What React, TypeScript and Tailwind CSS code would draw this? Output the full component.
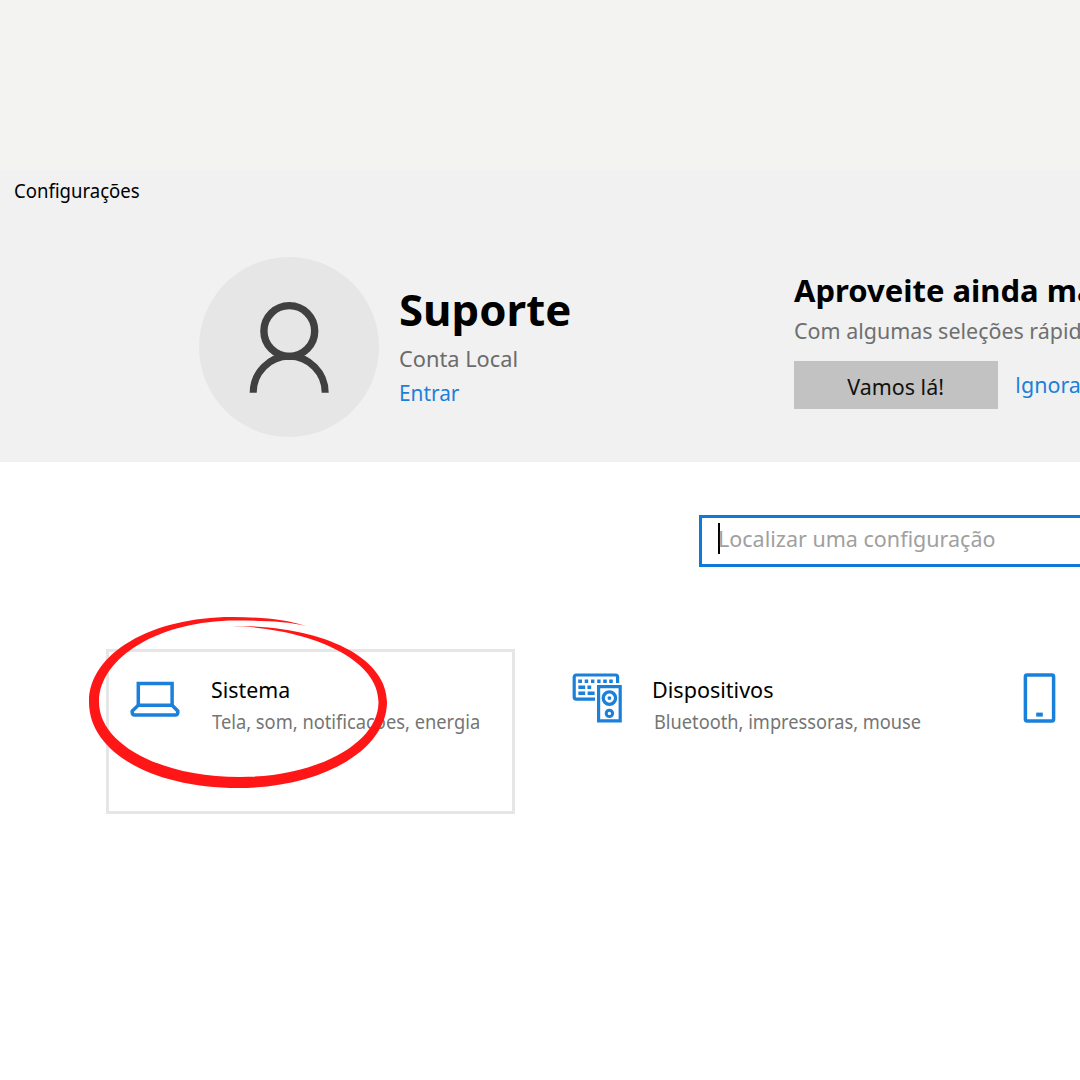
import type { ReactNode } from "react";

function PersonIcon() {
  return (
    <svg viewBox="0 0 180 180" className="size-[180px]" fill="none" stroke="#404040">
      <circle cx="90.3" cy="74" r="25.4" strokeWidth="7.4" />
      <path d="M54.2 135.7a36 36.4 0 0 1 72 0" strokeWidth="7" />
    </svg>
  );
}

function LaptopIcon() {
  return (
    <svg viewBox="0 0 50 38" className="h-[38px] w-[50px]" fill="none" stroke="#1a80da" strokeWidth="3.5" strokeLinejoin="round">
      <path d="M8.3 25.2V3.4h33.8v21.8z" strokeLinejoin="miter" />
      <path d="M8.3 25.2 2.2 31v1.6c0 1.6.8 2.4 2.4 2.4h40.8c1.6 0 2.4-.8 2.4-2.4V31l-5.7-5.8" />
    </svg>
  );
}

function DevicesIcon() {
  return (
    <svg viewBox="0 0 50 50" className="size-[50px]" fill="none" stroke="#1a80da" strokeWidth="3.2">
      <path d="M23 26.1H4.2a2 2 0 0 1-2-2V4a2 2 0 0 1 2-2h39.4a2 2 0 0 1 2 2v6" />
      <path d="M6.2 8.3h3.8M12.7 8.3h3.5M19 8.3h3.4M25.2 8.3h3.4M31.2 8.3h3.6M37.2 8.3h3.6M6.4 14.3h6.8M15.4 14.3h3.8M6.4 20.3h6.8M15.6 20.3h7" strokeWidth="3.4" />
      <path d="M26.6 13.7h21.6v34.2H26.6z" />
      <circle cx="37.4" cy="25.1" r="6.2" strokeWidth="3.3" />
      <circle cx="37.4" cy="25.1" r="1.9" fill="#1a80da" stroke="none" />
      <circle cx="37.4" cy="40.4" r="3.2" strokeWidth="3" />
    </svg>
  );
}

function PhoneIcon() {
  return (
    <svg viewBox="0 0 34 50" className="h-[50px] w-[34px]" fill="none" stroke="#1a80da">
      <rect x="2.4" y="2.1" width="28.2" height="45.8" rx="1.6" strokeWidth="3.5" />
      <path d="M13.2 41.6h6.6" strokeWidth="4" />
    </svg>
  );
}

function MarkerCircle() {
  return (
    <svg viewBox="89 616 299 173" className="absolute -left-[20px] -top-[36px] h-[173px] w-[299px]" fill="#ff1616">
      <path d="M306 626C285 619 259 617 232 617C152 617 89 653 89 702C89 752 152 788 238 788C322 788 387 750 387 702C387 657 322 625 232 626C306 628 378.5 657 378.5 702C378.5 744 316 777 240 777C160 777 99 744 99 702C99 657 160 620.5 236 620.5C262 620.5 287 621 306 626Z" />
    </svg>
  );
}

function Category({ icon, title, detail }: { icon: ReactNode; title: ReactNode; detail: ReactNode }) {
  return (
    <div className="flex">
      <div className="w-[81px] shrink-0">{icon}</div>
      <div className="pt-[1px] whitespace-nowrap">
        {title}
        {detail}
      </div>
    </div>
  );
}

export default function App() {
  return (
    <main className="h-[1080px] w-[1080px] overflow-hidden bg-white font-['Noto_Sans',sans-serif] text-black">
      <div className="h-[170px] bg-[#f3f3f1]" />
      <header className="h-[292px] bg-[#f1f1f1] pt-[7px]">
        <h1 className="ml-[14px] w-fit origin-left scale-x-[0.928] text-[20px] leading-[28px]">Configurações</h1>
        <div className="mt-[52px] flex pl-[199px] whitespace-nowrap">
          <div className="size-[180px] shrink-0 rounded-full bg-[#e6e6e6]">
            <PersonIcon />
          </div>
          <div className="ml-[20px] w-[395px] shrink-0 pt-[25px]">
            <p className="w-fit origin-left scale-x-[1.018] text-[43px] leading-[56px] font-bold">Suporte</p>
            <p className="mt-[4px] w-fit origin-left scale-x-[0.968] text-[22.5px] leading-[34px] text-[#6b6b6b]">Conta Local</p>
            <a className="block w-fit origin-left scale-x-[0.925] text-[22.5px] leading-[34px] text-[#1a80da]">Entrar</a>
          </div>
          <div className="pt-[13px]">
            <p className="w-fit text-[31px] leading-[40px] font-bold">Aproveite ainda ma</p>
            <p className="mt-[4px] w-fit origin-left scale-x-[0.975] text-[22px] leading-[32px] text-[#6f6f6f]">Com algumas seleções rápid</p>
            <div className="mt-[15px] flex items-center">
              <button className="h-[48px] w-[204px] bg-[#c2c2c2] pt-[2px] text-[22px] leading-[46px] text-[#111]">
                <span className="inline-block scale-x-[0.975]">Vamos lá!</span>
              </button>
              <a className="-mt-[2px] ml-[17px] origin-left scale-x-[0.975] text-[22px] leading-[48px] text-[#1a80da]">
                <span className="font-['Open_Sans',sans-serif]">I</span>gnora
              </a>
            </div>
          </div>
        </div>
      </header>
      <div className="mt-[53px] ml-[699px] flex h-[52px] w-[500px] border-[3px] border-[#1079d8] pt-[5px] pl-[16px]">
        <span className="h-[31px] w-[2px] shrink-0 bg-black" />
        <span className="-mt-[1px] -ml-[2px] origin-left scale-x-[0.956] text-[22.5px] leading-[34px] whitespace-nowrap text-[#a0a0a0]">Localizar uma configuração</span>
      </div>
      <div className="mt-[82px] flex">
        <section className="relative ml-[106px] h-[165px] w-[409px] shrink-0 border-[3px] border-[#e6e6e6] pt-[21px] pl-[21px]">
          <Category
            icon={<div className="pt-[7px]"><LaptopIcon /></div>}
            title={<p className="w-fit origin-left scale-x-[0.97] text-[22px] leading-[30px]">Sistema</p>}
            detail={<p className="mt-[3px] ml-[1px] w-fit origin-left scale-x-[0.914] text-[20px] leading-[30px] text-[#757575]">Tela, som, notificações, energia</p>}
          />
          <MarkerCircle />
        </section>
        <section className="ml-[57px] w-[451px] shrink-0 pt-[24px]">
          <Category
            icon={<DevicesIcon />}
            title={<p className="-ml-px w-fit origin-left scale-x-[0.98] text-[22px] leading-[30px]">Dispositivos</p>}
            detail={<p className="mt-[3px] ml-[1px] w-fit origin-left scale-x-[0.911] text-[20px] leading-[30px] text-[#757575]">Bluetooth, impressoras, mouse</p>}
          />
        </section>
        <section className="shrink-0 pt-[24px]">
          <PhoneIcon />
        </section>
      </div>
    </main>
  );
}
